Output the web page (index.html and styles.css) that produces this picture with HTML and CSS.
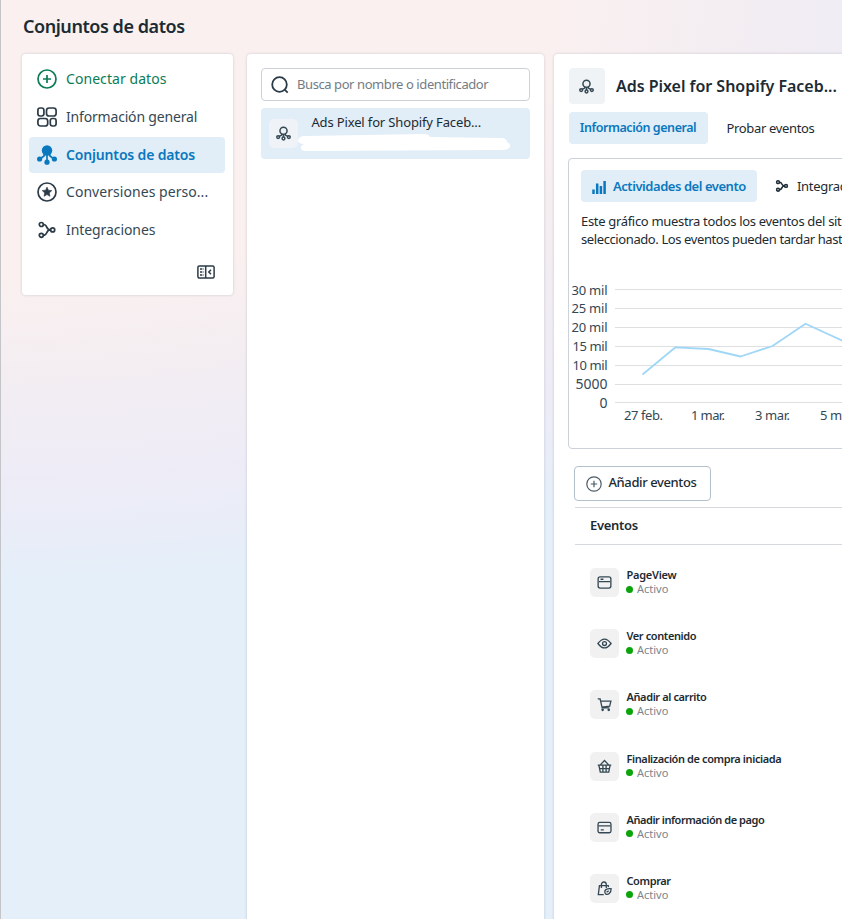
FILE: index.html
```html
<!DOCTYPE html>
<html lang="es">
<head>
<meta charset="utf-8">
<title>Conjuntos de datos</title>
<link rel="stylesheet" href="styles.css">
</head>
<body>
<svg class="defs" width="0" height="0" aria-hidden="true">
  <symbol id="plus" viewBox="0 0 20 20"><circle cx="10" cy="10" r="9"/><path d="M10 6v8M6 10h8"/></symbol>
  <symbol id="dataset" viewBox="0 0 16 16"><circle cx="8" cy="5" r="3.800"/><path d="M6.300 8.200 6 9.700 3 11.300M9.700 8.200l.3 1.500 3 1.600M8 8.800v3"/><circle cx="2.300" cy="11.800" r="1.500"/><circle cx="8" cy="13.300" r="1.500"/><circle cx="13.700" cy="11.800" r="1.500"/></symbol>
  <symbol id="branch" viewBox="0 0 20 20"><circle cx="4.300" cy="4.500" r="2"/><circle cx="4.300" cy="15.300" r="2"/><circle cx="15.700" cy="9.900" r="2"/><path d="M6.500 4.500C11 4.500 8.500 9.900 13.500 9.900M6.500 15.300C11 15.300 8.500 9.900 13.500 9.900"/></symbol>
</svg>
<div class="page">
  <h1>Conjuntos de datos</h1>
  <div class="columns">
    <nav class="panel sidebar">
      <a class="nav green"><svg class="ic"><use href="#plus"/></svg><span class="nav-connect">Conectar datos</span></a>
      <a class="nav"><svg class="ic" viewBox="0 0 20 20"><rect x=".9" y="1" width="6" height="8" rx="2.200"/><rect x="9.500" y="1" width="9.600" height="8" rx="2.600"/><rect x=".9" y="11.500" width="9.800" height="7.500" rx="2.600"/><rect x="13.300" y="11.500" width="5.800" height="7.500" rx="2.200"/></svg><span class="nav-info">Información general</span></a>
      <a class="nav active"><svg class="ic" viewBox="0 0 20 20"><g fill="currentColor" stroke="none"><circle cx="10" cy="5.500" r="5.200"/><circle cx="2.600" cy="14" r="2.600"/><circle cx="10" cy="17.200" r="2.600"/><circle cx="17.400" cy="14" r="2.600"/></g><path d="M7.500 9 7 11 3 14M12.500 9l.5 2 4 3M10 10v7"/></svg><span class="nav-sel">Conjuntos de datos</span></a>
      <a class="nav"><svg class="ic" viewBox="0 0 20 20"><circle cx="10" cy="10" r="9"/><path d="m10 5.100 1.400 3.100 3.400.4-2.500 2.300.7 3.400-3-1.700-3 1.700.7-3.400-2.500-2.300 3.400-.4z" fill="currentColor" stroke-width=".6"/></svg><span class="nav-conv">Conversiones perso...</span></a>
      <a class="nav"><svg class="ic"><use href="#branch"/></svg><span class="nav-int">Integraciones</span></a>
      <svg class="collapse" viewBox="0 0 18 14"><rect x=".9" y=".9" width="16.200" height="12.200" rx="1.500"/><path d="M8.700 1v12M14 4.700 11.800 7 14 9.300"/><path d="M3 4h3.500M3 7h3.500M3 10h3.500" stroke-width="1.300" stroke-dasharray="2.300 .6"/></svg>
    </nav>

    <section class="panel list">
      <div class="search"><svg viewBox="0 0 18 18"><circle cx="8.500" cy="8.500" r="7.300"/><path d="m13.700 13.700 3 3"/></svg><span>Busca por nombre o identificador</span></div>
      <div class="item">
        <span class="tile small"><svg><use href="#dataset"/></svg></span>
        <div class="item-body">
          <span class="item-name">Ads Pixel for Shopify Faceb...</span>
          <svg class="strip" viewBox="0 0 213 20"><path d="M5 3 126 1q5 0 6 3l71 1q6 0 6 4 4 2 3 5-2 3-7 3L8 18q-5 0-5-3 0-3 3-4-5 0-6-3 0-4 5-5z"/></svg>
        </div>
      </div>
    </section>

    <main class="panel detail">
      <header><span class="tile large"><svg><use href="#dataset"/></svg></span><h2>Ads Pixel for Shopify Faceb...</h2></header>
      <div class="tabs"><span class="tab on general">Información general</span><span class="tab other">Probar eventos</span></div>
      <section class="chart-card">
        <div class="subtabs">
          <span class="tab on activity"><svg viewBox="0 0 14 14"><path d="M1.500 14V9.500M5.200 14V3.500M8.900 14V6M12.600 14V1" stroke-width="2.500"/></svg><b>Actividades del evento</b></span>
          <span class="tab integ"><svg><use href="#branch"/></svg><span>Integraciones</span></span>
        </div>
        <p><span class="line-one">Este gráfico muestra todos los eventos del sitio web</span><br><span class="line-two">seleccionado. Los eventos pueden tardar hasta 30 minutos</span></p>
        <svg class="chart" width="400" height="150" viewBox="0 0 400 150">
          <g class="grid"><path d="M46 10.500H400M46 29.500H400M46 48.500H400M46 67.500H400M46 86.500H400M46 105.500H400M46 123.500H400"/></g>
          <g class="ylab" text-anchor="end"><text x="38.500" y="16" textLength="36">30 mil</text><text x="38.500" y="34" textLength="36">25 mil</text><text x="38.500" y="53" textLength="36">20 mil</text><text x="38.500" y="72" textLength="35">15 mil</text><text x="38.500" y="91" textLength="35">10 mil</text><text class="digits" x="38.500" y="110">5000</text><text class="digits" x="38.500" y="129">0</text></g>
          <g class="xlab"><text x="55" y="141" textLength="39">27 feb.</text><text x="122" y="141" textLength="34">1 mar.</text><text x="186" y="141" textLength="35">3 mar.</text><text x="251" y="141" textLength="35">5 mar.</text></g>
          <path class="series" d="M73.500 95.500 106.500 68.300 139.500 70 171.500 77.500 203.500 67 236.500 44.700 274 62"/>
        </svg>
      </section>
      <div class="add"><svg><use href="#plus"/></svg><span>Añadir eventos</span></div>
      <h3>Eventos</h3>
      <ul>
        <li><span class="tile"><svg viewBox="0 0 16 16"><rect x="1.200" y="2" width="13.600" height="12" rx="2.200"/><path d="M2 7h12M3.800 4.500h3"/></svg></span><div><b class="short">PageView</b><i>Activo</i></div></li>
        <li><span class="tile"><svg viewBox="0 0 16 16"><path d="M1 8Q8-1.500 15 8 8 17.500 1 8z"/><circle cx="8" cy="8" r="2.100"/></svg></span><div><b>Ver contenido</b><i>Activo</i></div></li>
        <li><span class="tile"><svg viewBox="0 0 16 16"><path d="M.8 2h2.500L5.500 11.500h7.700M3.800 4.300h11l-1.300 5.400-8.300 1.200"/><circle cx="6" cy="13.700" r=".7"/><circle cx="12.500" cy="13.700" r=".7"/></svg></span><div><b>Añadir al carrito</b><i>Activo</i></div></li>
        <li><span class="tile"><svg viewBox="0 0 16 16"><path d="M.8 6.500h14.400M2 6.500l1.500 7.500h9l1.500-7.500M3.500 6.300 8 1.600l4.500 4.700M6.300 6.500v7.500M9.700 6.500v7.500M3 10.200h10"/></svg></span><div><b>Finalización de compra iniciada</b><i>Activo</i></div></li>
        <li><span class="tile"><svg viewBox="0 0 16 16"><rect x="1.100" y="2.600" width="13.800" height="11" rx="1.800"/><path d="M1.500 6.300h13M4 10.500h3.300"/></svg></span><div><b class="pay">Añadir información de pago</b><i>Activo</i></div></li>
        <li><span class="tile"><svg viewBox="0 0 16 16"><path d="M7.200 14.500H1.400L2.600 5h9.400l.3 1.500M4.700 7.500V4c0-3.900 5.200-3.900 5.200 0v3.500"/><path d="M8.500 12.500C7.500 9 11 7.800 15 8.200c.3 4.500-3.500 7.300-6 5.300zM10.200 12l2.300-1.600"/></svg></span><div><b>Comprar</b><i>Activo</i></div></li>
      </ul>
    </main>
  </div>
</div>
</body>
</html>
```
FILE: styles.css
```css
* { box-sizing: border-box; }
body { margin: 0; overflow: hidden; font-family: "Noto Sans", sans-serif; color: #1c2b33; }
svg { fill: none; stroke: currentColor; stroke-width: 1.5; flex: none; }
.defs { position: absolute; }
.page {
  width: 842px; height: 919px; overflow: hidden; border-left: 1px solid #c4c5c9; padding-left: 21px;
  background: radial-gradient(ellipse 1150px 590px at 0 0, #f9f0ef 0, #faf0f0 48%, #f2edf2 66%, #eeecf6 80%, #e9edf8 91%, #e4eff9 99%);
}
h1 { margin: 0; height: 54px; line-height: 53px; font-size: 18px; font-weight: 600; letter-spacing: -.45px; padding-left: 1px; }
.columns { display: flex; align-items: flex-start; height: 865px; }
.panel { background: #fff; border-radius: 4px; box-shadow: 0 0 3px rgba(40, 50, 70, .2); flex: none; }

.sidebar { width: 211px; height: 241px; padding: 7px 8px 0 7px; margin-right: 14px; display: flex; flex-direction: column; gap: 1.75px; }
.nav { height: 36px; display: flex; align-items: center; gap: 9px; padding-left: 8px; border-radius: 4px; font-size: 14px; line-height: 20px; white-space: nowrap; color: #344854; }
.nav .ic { width: 20px; height: 20px; stroke-width: 1.7; color: #2b3b47; }
.nav.green, .nav.green .ic { color: #0a7c56; }
.nav.active { background: #e1edf7; color: #0a78be; font-weight: 600; }
.nav.active .ic { color: #0a78be; }
.nav-connect { letter-spacing: .06px; }
.nav-info { letter-spacing: -.18px; }
.nav-sel { letter-spacing: -.16px; }
.nav-conv { letter-spacing: .05px; }
.nav-int { letter-spacing: -.08px; }
.collapse { width: 18px; height: 14px; margin: 15px 10px 0; align-self: flex-end; color: #2b3b47; }

.list { width: 297px; height: 880px; padding: 14px 14px 0; margin-right: 10px; }
.search { height: 33px; border: 1px solid #cbd2d9; border-radius: 4px; display: flex; align-items: center; padding: 0 0 0 9px; gap: 8px; font-size: 13px; color: #737c84; letter-spacing: -.42px; white-space: nowrap; }
.search svg { width: 18px; height: 18px; color: #2b3b47; stroke-width: 1.8; }
.search span { margin-top: -1px; }
.item { display: flex; height: 51px; margin-top: 7px; background: #e1edf7; border-radius: 4px; padding: 11px 0 0 8px; }
.item-body { margin-top: -7px; display: flex; flex-direction: column; }
.item-name { font-size: 13px; line-height: 20px; margin-left: 13.400px; letter-spacing: -.14px; white-space: nowrap; }
.strip { width: 213px; height: 20px; fill: #fff; stroke: none; margin-top: 1px; }

.tile { width: 29px; height: 29px; border-radius: 5px; background: #f1f1f2; display: flex; align-items: center; justify-content: center; flex: none; color: #344854; }
.tile svg { width: 15px; height: 15px; stroke-width: 1.4; }
.tile.small { background: #eff2f6; }
.tile.large { width: 36px; height: 36px; background: #f0f3f6; border-radius: 4px; }
.tile.small svg, .tile.large svg { stroke-width: 1.6; }

.detail { width: 360px; height: 880px; padding: 14px 0 0 14px; }
header { display: flex; align-items: center; gap: 11.500px; }
header .tile { margin-left: .5px; }
h2 { margin: 0; font-size: 16px; font-weight: 600; letter-spacing: -.03px; white-space: nowrap; }
.tabs, .subtabs { display: flex; white-space: nowrap; font-size: 13px; }
.tabs { margin-top: 8px; padding-left: .5px; }
.tab { height: 32px; display: flex; align-items: center; border-radius: 4px; flex: none; }
.on { background: #e1edf7; color: #0a78be; font-weight: 600; }
.general { width: 139px; justify-content: center; letter-spacing: -.45px; font-size: 12.5px; }
.tabs .tab, .subtabs .tab { padding-bottom: 1px; }
.other { margin-left: 19px; letter-spacing: -.34px; }
.other { padding-bottom: 2px; }
.chart-card { width: 400px; height: 291px; margin-top: 14px; border: 1px solid #cbd2d9; border-radius: 4px; padding: 11px 0 0; }
.subtabs { padding-left: 12px; }
.activity { width: 176px; padding-left: 11px; gap: 7px; letter-spacing: -.45px; }
.activity svg { width: 14px; height: 14px; margin-top: 2px; }
.activity b { font-weight: 600; }
.integ { margin-left: 18px; gap: 8px; letter-spacing: -.3px; }
.integ svg { width: 14px; height: 14px; stroke-width: 2.2; }
p { margin: 10px 0 0 12px; font-size: 13px; line-height: 18px; white-space: nowrap; letter-spacing: -.32px; }
.line-two { letter-spacing: -.4px; }
.chart { display: block; margin-top: 31px; }
.grid { stroke: #dedfe1; stroke-width: 1; }
.ylab, .xlab { font-size: 13px; fill: #344854; stroke: none; }
.digits { font-size: 14px; }
.series { stroke: #a0d7f7; stroke-width: 1.8; stroke-linejoin: round; }
.add { width: 137px; height: 35px; margin: 17px 0 0 6px; border: 1px solid #b4c0ca; border-radius: 4px; display: flex; align-items: center; padding-left: 11px; gap: 6.500px; font-size: 13px; font-weight: 500; letter-spacing: -.4px; white-space: nowrap; }
.add svg { width: 16px; height: 16px; color: #4a5a66; }
.add span { margin-top: -3px; }
h3 { margin: 6px 0 0 7px; height: 38px; line-height: 35px; border: solid #d5d8dc; border-width: 1px 0; padding-left: 15px; font-size: 13px; font-weight: 600; letter-spacing: -.3px; }
ul { list-style: none; margin: 23px 0 0 22px; padding: 0; }
li { display: flex; gap: 7.500px; height: 61.2px; }
li div { display: flex; flex-direction: column; white-space: nowrap; }
b { font-weight: 600; }
li b { font-size: 11px; line-height: 14px; letter-spacing: -.4px; }
li .short { letter-spacing: -.25px; }
li .pay { letter-spacing: -.46px; }
li i { font-style: normal; font-size: 11px; line-height: 14px; color: #7d858c; display: flex; align-items: center; gap: 4px; letter-spacing: 0; }
li i::before { content: ""; width: 7px; height: 7px; margin-left: -.5px; border-radius: 50%; background: #0ba50b; }
```
